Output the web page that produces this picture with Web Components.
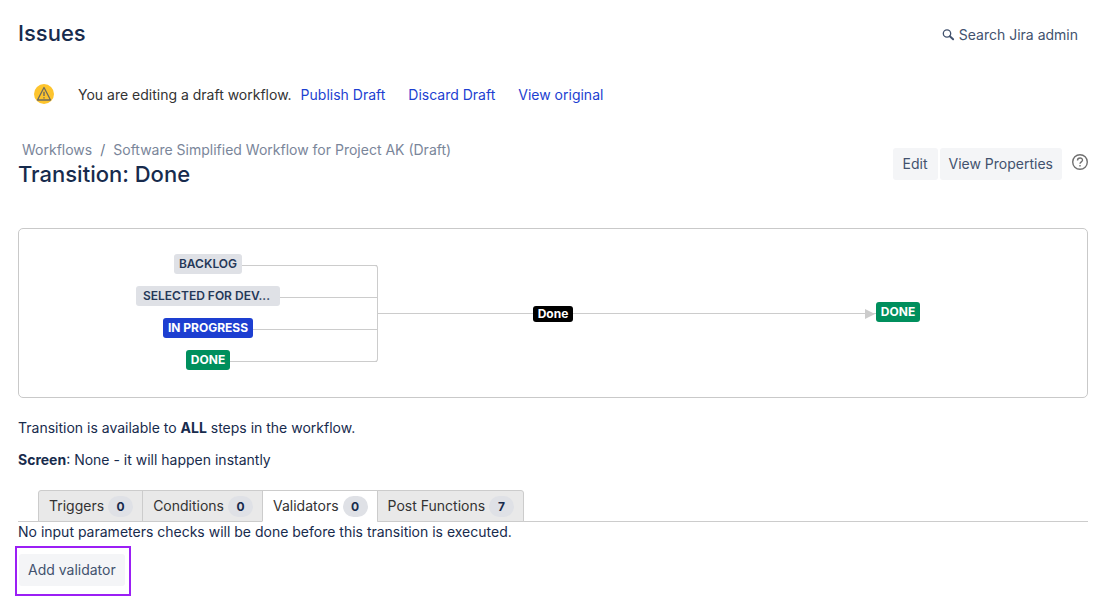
<!DOCTYPE html>
<html lang="en">
<head>
<meta charset="utf-8">
<title>Issues - Transition: Done</title>
<style>
  body { margin: 0; background: #fff; color: #172b4d; font: 14px/20px Inter, "Liberation Sans", sans-serif; }
</style>
</head>
<body>
<transition-page></transition-page>
<script>
const define = (name, html, setup) => customElements.define(name, class extends HTMLElement {
  connectedCallback() {
    if (this.shadowRoot) return;
    const t = document.createElement('template');
    t.innerHTML = html;
    this.attachShadow({ mode: 'open' }).append(t.content.cloneNode(true));
    if (setup) setup(this, this.shadowRoot);
  }
});

define('jira-button', `
<style>
  :host { display: inline-flex; }
  button { height: 32px; padding: 0 9px; border: 0; border-radius: 3px; background: #f4f5f7; color: #42526e; font: inherit; white-space: nowrap; display: flex; align-items: center; gap: 4px; cursor: pointer; }
  :host([subtle]) button { background: none; padding: 0 10px; }
  :host([wide]) button { padding: 0 10px; }
</style>
<button type="button"><slot></slot></button>`);

define('page-header', `
<style>
  :host { display: flex; justify-content: space-between; align-items: flex-start; }
  h1 { margin: 0; font-size: 22px; line-height: 28px; font-weight: 500; }
  svg { width: 14px; height: 14px; }
</style>
<h1>Issues</h1>
<jira-button subtle><svg viewBox="0 0 14 14" fill="none" stroke="#42526e" aria-hidden="true"><circle cx="6" cy="5.500" r="3.700" stroke-width="1.300"/><path d="M8.800 8.300l3.300 3" stroke-width="2" stroke-linecap="round"/></svg>Search Jira admin</jira-button>`);

define('draft-notice', `
<style>
  :host { display: flex; align-items: flex-start; line-height: 22px; color: #333; }
  svg { width: 20px; height: 20px; margin-right: 24px; }
  a { color: #1d3fd1; text-decoration: none; }
  nav { display: flex; gap: 23px; margin-left: 9px; }
</style>
<svg viewBox="0 0 20 20" aria-hidden="true"><circle cx="10" cy="10" r="10" fill="#fdc42d"/><path d="M10 3.500L16.500 16H3.500z" fill="none" stroke="#6d6a5e" stroke-width="1.300" stroke-linejoin="round"/><path d="M10 7.800v4.200M10 13.200v1.300" stroke="#6d6a5e" stroke-width="1.400"/></svg>
<span>You are editing a draft workflow.</span>
<nav><a href="#publish">Publish Draft</a><a href="#discard">Discard Draft</a><a href="#original">View original</a></nav>`);

define('transition-heading', `
<style>
  :host { display: flex; justify-content: space-between; align-items: flex-start; }
  nav { display: flex; gap: 8px; padding-left: 4px; color: #6b778c; }
  a { color: #7a869a; text-decoration: none; }
  h2 { margin: 0; font-size: 22px; line-height: 28px; font-weight: 500; }
  .actions { display: flex; align-items: flex-start; gap: 2px; margin-top: 8px; }
  .help { display: flex; padding: 0; margin: 6px 0 0 8px; border: 0; background: none; }
  svg { width: 16px; height: 16px; }
</style>
<div>
  <nav aria-label="Breadcrumb"><a href="#workflows">Workflows</a><span>/</span><a href="#workflow">Software Simplified Workflow for Project AK (Draft)</a></nav>
  <h2>Transition: Done</h2>
</div>
<div class="actions">
  <jira-button wide>Edit</jira-button>
  <jira-button>View Properties</jira-button>
  <button class="help" aria-label="Help"><svg viewBox="0 0 16 16" fill="none" stroke="#707070" stroke-width="1.400"><circle cx="8" cy="8" r="7.300"/><path d="M5.500 6.500C5.500 3.200 10.600 3.300 10.500 6.200 10.400 7.900 8 7.800 8 9.800"/><path d="M8 10.900v1.600"/></svg></button>
</div>`);

define('status-lozenge', `
<style>
  :host { display: block; flex: none; box-sizing: border-box; height: 20px; padding: 0 5px; border-radius: 3px; background: #dfe1e6; color: #253858; font-size: 12px; line-height: 20px; font-weight: 600; white-space: nowrap; }
  :host([kind=progress]) { background: #1d3fd1; color: #fff; font-weight: 700; }
  :host([kind=done]) { background: #008f5d; color: #fff; font-weight: 700; }
  :host([kind=long]) { min-width: 144px; padding: 0 7px; }
  :host([kind=transition]) { height: 16px; line-height: 16px; background: #000; color: #fff; font-weight: 700; }
</style>
<slot></slot>`);

define('workflow-diagram', `
<style>
  :host { display: grid; grid-template-columns: 338fr 352fr 338fr; align-items: center; padding: 25px 20px; border: 1px solid #c9c9c9; border-radius: 5px; }
  .row { display: flex; height: 22px; align-items: flex-start; }
  .row > i { flex: 1; box-sizing: border-box; height: 12px; }
  i.wire { border-bottom: 1px solid #ccc; }
  .sources { display: grid; gap: 10px; position: relative; }
  .sources::after { content: ""; position: absolute; right: -1px; top: 11px; bottom: 10px; width: 4px; box-sizing: border-box; border: solid #ccc; border-width: 1px 1px 1px 0; border-radius: 0 3px 3px 0; }
  .middle status-lozenge { margin-top: 4px; }
  .arrow { width: 11px; height: 10px; margin: 7px 0 0 -11px; }
</style>
<div class="sources">
  <div class="row"><i></i><status-lozenge>BACKLOG</status-lozenge><i class="wire"></i></div>
  <div class="row"><i></i><status-lozenge kind="long">SELECTED FOR DEV...</status-lozenge><i class="wire"></i></div>
  <div class="row"><i></i><status-lozenge kind="progress">IN PROGRESS</status-lozenge><i class="wire"></i></div>
  <div class="row"><i></i><status-lozenge kind="done">DONE</status-lozenge><i class="wire"></i></div>
</div>
<div class="row middle"><i class="wire"></i><status-lozenge kind="transition">Done</status-lozenge><i class="wire"></i></div>
<div class="row target"><i class="wire"></i><svg class="arrow" viewBox="0 0 11 10" aria-hidden="true"><path d="M0 0L10 5 0 10z" fill="#ccc"/></svg><status-lozenge kind="done">DONE</status-lozenge><i></i></div>`);

define('workflow-tab', `
<style>
  :host { display: block; margin-left: -1px; }
  a { display: flex; align-items: center; box-sizing: border-box; height: 32px; padding: 0 9px 0 10px; gap: 4px; border: 1px solid #ccc; background: #e9e9e9; color: #333; text-decoration: none; white-space: nowrap; }
  :host([active]) a { background: #fff; border-bottom-color: #fff; }
  :host(:first-child) a { border-top-left-radius: 3px; }
  :host(:last-child) a { border-top-right-radius: 3px; }
  b { box-sizing: border-box; min-width: 25px; padding: 0 8px; border-radius: 11px; background: #dfe1e6; color: #172b4d; font-size: 12px; line-height: 21px; text-align: center; }
</style>
<a href="#tab"><slot></slot><b></b></a>`, (host, root) => {
  root.querySelector('b').textContent = host.getAttribute('count');
});

define('tab-strip', `
<style>
  :host { display: flex; padding-left: 21px; height: 31px; border-bottom: 1px solid #ccc; }
</style>
<slot></slot>`);

define('focus-frame', `
<style>
  :host { display: flex; width: fit-content; margin: 4px 0 0 -3px; padding: 6px 4px 8px 2px; border: 2px solid #9b1ff5; }
</style>
<slot></slot>`);

define('transition-page', `
<style>
  :host { display: block; padding: 19px 18px; }
  draft-notice { margin: 33px 16px 0; }
  transition-heading { margin-top: 34px; }
  workflow-diagram { margin: 40px 0 20px; }
  p { margin: 0 0 12px; }
  tab-strip { margin-top: 20px; }
  .result { margin: 0; }
</style>
<page-header></page-header>
<draft-notice></draft-notice>
<transition-heading></transition-heading>
<workflow-diagram></workflow-diagram>
<p>Transition is available to <b>ALL</b> steps in the workflow.</p>
<p><b>Screen</b>: None - it will happen instantly</p>
<tab-strip>
  <workflow-tab count="0">Triggers</workflow-tab>
  <workflow-tab count="0">Conditions</workflow-tab>
  <workflow-tab count="0" active>Validators</workflow-tab>
  <workflow-tab count="7">Post Functions</workflow-tab>
</tab-strip>
<p class="result">No input parameters checks will be done before this transition is executed.</p>
<focus-frame><jira-button>Add validator</jira-button></focus-frame>`);
</script>
</body>
</html>
